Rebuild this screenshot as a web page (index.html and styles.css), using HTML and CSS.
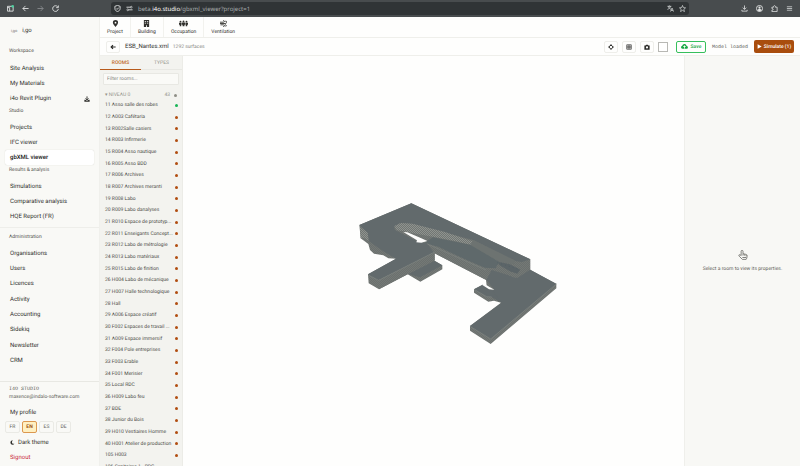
FILE: index.html
```html
<!DOCTYPE html>
<html lang="en">
<head>
<meta charset="utf-8">
<title>gbXML viewer</title>
<link rel="stylesheet" href="styles.css">
</head>
<body>
<svg class="sprite" aria-hidden="true">
  <symbol id="download" viewBox="0 0 16 16"><path d="M8 1v9M4 6.500l4 4 4-4" fill="none" stroke="currentColor" stroke-width="2.500"/><path d="M1 10h3l2 2h4l2-2h3v5H1z" fill="currentColor"/></symbol>
  <symbol id="arrow" viewBox="0 0 16 16"><path d="M15 8H2M8 2L2 8l6 6" fill="none" stroke="currentColor" stroke-width="2"/></symbol>
</svg>
<header class="browser">
  <div class="browser-nav">
    <button aria-label="Tabs"><svg viewBox="0 0 16 16"><path d="M1 3h13v11H1zM1 6h5v8" fill="none" stroke="currentColor" stroke-width="2"/><circle cx="13" cy="3" r="3" fill="#4fd0a0"/></svg></button>
    <button aria-label="Back"><svg viewBox="0 0 16 16"><use href="#arrow"/></svg></button>
    <button aria-label="Forward" class="dim"><svg viewBox="0 0 16 16"><path d="M1 8h13M8 2l6 6-6 6" fill="none" stroke="currentColor" stroke-width="2"/></svg></button>
    <button aria-label="Reload"><svg viewBox="0 0 16 16"><path d="M13 4a6.500 6.500 0 1 0 1.500 5M14.500 1v5h-5" fill="none" stroke="currentColor" stroke-width="2"/></svg></button>
  </div>
  <div class="address">
    <svg viewBox="0 0 16 16"><path d="M8 1l6 2v5c0 4-3 6-6 7-3-1-6-3-6-7V3zM5 8l2 2 4-4" fill="none" stroke="currentColor" stroke-width="2"/></svg>
    <svg viewBox="0 0 16 16"><path d="M1 5h9M6 11h9" stroke="currentColor" stroke-width="2"/><circle cx="12" cy="5" r="2" fill="none" stroke="currentColor" stroke-width="1.500"/><circle cx="4" cy="11" r="2" fill="none" stroke="currentColor" stroke-width="1.500"/></svg>
    <span class="url">beta.<b>i4o.studio</b>/gbxml_viewer?project=1</span>
    <svg viewBox="0 0 16 16"><path d="M1 3h9M5.500 1v2M3 3c1 4 4 6 6 7M8 3c-1 4-4 6-7 7M8 15l3.500-8L15 15M9.500 12.500h4" fill="none" stroke="currentColor" stroke-width="1.600"/></svg>
    <svg viewBox="0 0 16 16"><path d="M8 1l2 5 5 .5-4 3.500 1.500 5L8 12.300 3.500 15 5 10 1 6.500 6 6z" fill="none" stroke="currentColor" stroke-width="1.500"/></svg>
  </div>
  <div class="browser-tools">
    <button aria-label="Downloads"><svg viewBox="0 0 16 16"><path d="M8 1v9M4 6l4 4 4-4M2 11v3h12v-3" fill="none" stroke="currentColor" stroke-width="1.800"/></svg></button>
    <button aria-label="Account"><svg viewBox="0 0 16 16"><circle cx="8" cy="8" r="7" fill="none" stroke="currentColor" stroke-width="2"/><circle cx="8" cy="6" r="2.500" fill="currentColor"/><path d="M3 12c2-4 8-4 10 0l-5 3z" fill="currentColor"/></svg></button>
    <button aria-label="Extensions"><svg viewBox="0 0 16 16"><path d="M2 5h4c-1-5 5-5 4 0h4v10H2v-3c4 0 4-4 0-4z" fill="none" stroke="currentColor" stroke-width="1.800"/></svg></button>
    <button aria-label="Menu"><svg viewBox="0 0 16 16"><path d="M2 4h12M2 8h12M2 12h12" stroke="currentColor" stroke-width="1.600"/></svg></button>
  </div>
</header>
<div class="app">
  <aside class="sidebar">
    <a class="brand" href="#"><small>i,go</small><span>i,go</span></a>
    <nav>
      <h2>Workspace</h2>
      <ul class="nav first">
        <li><a href="#">Site Analysis</a></li>
        <li><a href="#">My Materials</a></li>
        <li><a href="#">i4o Revit Plugin <svg viewBox="0 0 16 16"><use href="#download"/></svg></a></li>
      </ul>
      <h2>Studio</h2>
      <ul class="nav">
        <li><a href="#">Projects</a></li>
        <li><a href="#">IFC viewer</a></li>
        <li><a href="#" class="active">gbXML viewer</a></li>
      </ul>
      <h2>Results &amp; analysis</h2>
      <ul class="nav">
        <li><a href="#">Simulations</a></li>
        <li><a href="#">Comparative analysis</a></li>
        <li><a href="#">HQE Report (FR)</a></li>
      </ul>
      <h2 class="ruled">Administration</h2>
      <ul class="nav">
        <li><a href="#">Organisations</a></li>
        <li><a href="#">Users</a></li>
        <li><a href="#">Licences</a></li>
        <li><a href="#">Activity</a></li>
        <li><a href="#">Accounting</a></li>
        <li><a href="#">Sidekiq</a></li>
        <li><a href="#">Newsletter</a></li>
        <li><a href="#">CRM</a></li>
      </ul>
    </nav>
    <div class="account">
      <p class="org">I4O STUDIO</p>
      <p class="mail">maxence@indalo-software.com</p>
      <a href="#" class="row">My profile</a>
      <div class="langs"><button>FR</button><button class="on">EN</button><button>ES</button><button>DE</button></div>
      <button class="row"><svg viewBox="0 0 16 16"><path d="M9 1C-1 1-1 15 8 15c3 0 5-1 6-3C6 13 4 6 9 1z" fill="currentColor"/></svg>Dark theme</button>
      <a href="#" class="row signout">Signout</a>
    </div>
  </aside>
  <main>
    <nav class="sections">
      <a href="#"><svg viewBox="0 0 16 16"><path fill-rule="evenodd" d="M8 0C1 0 1 7 4 11l4 5 4-5c3-4 3-11-4-11zm0 4a2 2 0 1 1 0 4 2 2 0 0 1 0-4z"/></svg>Project</a>
      <a href="#"><svg viewBox="0 0 16 16"><path fill-rule="evenodd" d="M2 0h12v16H9v-4H7v4H2zM4 2v2h3V2zm5 0v2h3V2zM4 6v2h3V6zm5 0v2h3V6z"/></svg>Building</a>
      <a href="#"><svg class="wide" viewBox="0 0 24 16"><circle cx="4" cy="3" r="2.500"/><circle cx="12" cy="2.500" r="2.500"/><circle cx="20" cy="3" r="2.500"/><path d="M0 6h7v5H6v4H2v-4H0zM8 5.500h8v6h-1.500v4h-5v-4H8zM17 6h7v5h-2v4h-4v-4h-1z"/></svg>Occupation</a>
      <a href="#"><svg viewBox="0 0 16 16"><path d="M0 5h8c4 0 2-5-1-3M0 8h12c5 0 4-7 0-5M1 11h7c4 0 2 6-1 3M11 11c4-1 4 3 2 4" fill="none" stroke="currentColor" stroke-width="2"/></svg>Ventilation</a>
    </nav>
    <div class="toolbar">
      <button class="tool" aria-label="Back"><svg viewBox="0 0 16 16"><path d="M15 8H3M8 3L3 8l5 5" fill="none" stroke="currentColor" stroke-width="3"/></svg></button>
      <h1>ESB_Nantes.xml</h1>
      <span class="count">1292 surfaces</span>
      <button class="tool push" aria-label="Fit view"><svg viewBox="0 0 16 16"><path d="M8 0l4 5H4zM8 16l4-5H4zM0 8l5-4v8zM16 8l-5-4v8z"/></svg></button>
      <button class="tool" aria-label="Grid"><svg viewBox="0 0 16 16"><path d="M2 2h12v12H2zM2 6h12M2 10h12M8 2v12" fill="none" stroke="currentColor" stroke-width="1.700"/></svg></button>
      <button class="tool" aria-label="Snapshot"><svg viewBox="0 0 16 16"><path fill-rule="evenodd" d="M1 4h3l2-2h4l2 2h3v11H1zm7 2a3 3 0 1 0 0 6 3 3 0 0 0 0-6z"/></svg></button>
      <button class="swatch" aria-label="Background colour"></button>
      <button class="save"><svg viewBox="0 0 18 16"><path fill-rule="evenodd" d="M4 14C-1 14-1 7 3 7 4 0 13 0 14 6c5 1 5 8 0 8zM9 5L5 9h3v4h2V9h3z"/></svg>Save</button>
      <span class="status">Model loaded</span>
      <button class="simulate"><svg viewBox="0 0 16 16"><path d="M2 1l13 7-13 7z"/></svg>Simulate (1)</button>
    </div>
    <div class="workspace">
      <section class="rooms">
        <div class="tabs"><button class="on">ROOMS</button><button>TYPES</button></div>
        <input type="text" placeholder="Filter rooms..." aria-label="Filter rooms">
        <div class="level"><span>▾ NIVEAU 0</span><span class="total">43</span><i></i></div>
        <ul>
          <li class="ok"><span>11 Asso salle des robes</span></li>
          <li><span>12 A003 Cafétaria</span></li>
          <li><span>13 R002Salle casiers</span></li>
          <li><span>14 R003 Infirmerie</span></li>
          <li><span>15 R004 Asso nautique</span></li>
          <li><span>16 R005 Asso BDD</span></li>
          <li><span>17 R006 Archives</span></li>
          <li><span>18 R007 Archives meranti</span></li>
          <li><span>19 R008 Labo</span></li>
          <li><span>20 R009 Labo danalyses</span></li>
          <li><span>21 R010 Espace de prototyp...</span></li>
          <li><span>22 R011 Enseigants Concept...</span></li>
          <li><span>23 R012 Labo de métrologie</span></li>
          <li><span>24 R013 Labo matériaux</span></li>
          <li><span>25 R015 Labo de finition</span></li>
          <li><span>26 H004 Labo de mécanique</span></li>
          <li><span>27 H007 Halle technologique</span></li>
          <li><span>28 Hall</span></li>
          <li><span>29 A006 Espace créatif</span></li>
          <li><span>30 F002 Espaces de travail ...</span></li>
          <li><span>31 A009 Espace immersif</span></li>
          <li><span>32 F004 Pole entreprises</span></li>
          <li><span>33 F003 Erable</span></li>
          <li><span>34 F001 Merisier</span></li>
          <li><span>35 Local RDC</span></li>
          <li><span>36 H009 Labo feu</span></li>
          <li><span>37 BDE</span></li>
          <li><span>38 Junior du Bois</span></li>
          <li><span>39 H010 Vestiaires Homme</span></li>
          <li><span>40 H001 Atelier de production</span></li>
          <li><span>105 H003</span></li>
          <li><span>106 Sanitaires 1 - RDC</span></li>
        </ul>
      </section>
      <section class="viewer" aria-label="3D model">
        <svg viewBox="183 56 501 410">
          <defs>
            <pattern id="mesh" width="6" height="6" patternUnits="userSpaceOnUse"><rect width="6" height="6" fill="#6b706e"/><path d="M0 0h3v3H0zM3 3h3v3H3z" fill="#747976"/></pattern>
            <pattern id="lightmesh" width="6" height="6" patternUnits="userSpaceOnUse"><rect width="6" height="6" fill="#717673"/><path d="M0 0h3v3H0zM3 3h3v3H3z" fill="#8f938f"/></pattern>
          </defs>
          <g transform="translate(340 190) scale(.33333)">
            <path fill="url(#mesh)" d="M58 105L214 40 571 208V240L649 281V295L452 462 390 422V408L483 338 462 332 445 335 402 308V298L428 284 440 288 438 269 284 190V213L307 226V238L241 275 203 253 117 298 86 280 84 253 168 206 145 205 130 196 102 191 90 180 85 162 62 145z"/>
            <path fill="#626a6c" d="M58 105L214 40 571 208 545 216 522 212 400 150 215 101 178 100 162 112 165 120 225 151 270 163 284 186 115 270 84 253 168 206 130 184 86 153 83 129z"/>
            <path fill="url(#lightmesh)" d="M60 110L83 128 86 152 71 143 62 145z"/>
            <path fill="url(#lightmesh)" d="M163 108L183 99 218 101 315 126 405 157 395 166 345 153 190 124 170 121z"/>
            <path fill="#6d7371" d="M400 150L525 211 522 222 480 216 390 166z"/>
            <path fill="#5f696b" d="M279 142L390 164 478 216 468 235 435 233 255 157z"/>
            <path fill="url(#mesh)" d="M262 162L295 170 440 239 438 270 284 190z"/>
            <path fill="#626a6c" d="M455 240L528 263 567 237 649 282 452 446 390 408 485 338 455 321 440 310 463 298 439 270z"/>
            <path fill="#626a6c" d="M402 298L428 284 450 297 460 306 485 338 455 320 440 320z"/>
            <path fill="url(#mesh)" d="M468 232L476 221 510 238 531 245 569 210V240L533 263 520 262 484 244z"/>
            <path fill="#5c6568" d="M478 216L510 223 541 239 532 251 510 244 476 224z"/>
            <path fill="#626a6c" d="M205 252L284 212 307 226 240 262z"/>
            <path fill="url(#mesh)" d="M116 270L284 186V211L203 253 117 298z"/>
            <path fill="#fdfdfc" d="M190 126L202 127 244 145 262 153 244 158 229 157 231 151z"/>
            <path fill="#fdfdfc" d="M426 284L440 286 463 299 447 298z"/>
            <path fill="none" stroke="#7f8582" stroke-width="2" d="M86 256L116 271 284 186M390 409L452 447 649 282M402 298L440 320 455 321M262 162L438 240"/>
            <path fill="none" stroke="#4f5d63" stroke-width="2" stroke-dasharray="3 9" d="M472 218L540 239"/>
          </g>
        </svg>
      </section>
      <aside class="properties">
        <svg viewBox="0 0 16 16"><path d="M5 9V2c0-2 3-2 3 0v4l5 1c2 1 2 2 1 6l-1 2H7L2 10c-2-3 1-3 3-1zM8 6v3M10.500 7v2M13 8v2M7 12h6" fill="none" stroke="currentColor" stroke-width="1.200"/></svg>
        <p>Select a room to view its properties.</p>
      </aside>
    </div>
  </main>
</div>
</body>
</html>
```
FILE: styles.css
```css
* { box-sizing: border-box; }
body { margin: 0; height: 100vh; overflow: hidden; display: flex; flex-direction: column; font: 6px/8px Roboto, "Liberation Sans", sans-serif; text-rendering: geometricPrecision; color: #30302d; background: #fefefd; }
button { padding: 0; border: 0; background: none; font: inherit; color: inherit; text-rendering: inherit; display: flex; align-items: center; justify-content: center; }
a { color: inherit; text-decoration: none; }
ul { margin: 0; padding: 0; list-style: none; }
h1, h2, p { margin: 0; font-weight: 400; }
svg { width: 7px; height: 7px; flex: none; fill: currentColor; }
.sprite { display: none; }

.browser { flex: none; height: 17px; display: flex; align-items: center; background: #484c4e; color: #e4e6e6; font: 6px/8px "Noto Sans", sans-serif; }
.browser-nav { width: 111px; padding-left: 7px; display: flex; gap: 8px; }
.browser-nav .dim { color: #888c8e; }
.address { flex: 1; max-width: 578px; height: 13px; padding: 0 3px; border-radius: 3px; background: #303436; display: flex; align-items: center; gap: 5px; }
.url { flex: 1; color: #a9adae; }
.url b { font-weight: 400; color: #fff; }
.browser-tools { margin-left: auto; padding-right: 7px; display: flex; gap: 8px; }

.app { flex: 1; min-height: 0; display: flex; }
.sidebar { flex: none; width: 100px; display: flex; flex-direction: column; background: #f9f9f6; border-right: 1px solid #f0f0ec; }
.brand { display: flex; gap: 5px; align-items: center; padding: 10px 11px 0; }
.brand small { font-size: 4px; color: #74746e; }
.sidebar h2 { padding: 0 9px; font-size: 5px; line-height: 8px; color: #52524d; }
.brand + nav h2:first-child { margin-top: 12px; }
.nav { padding: 5px 5px 0; display: grid; grid-auto-rows: 15px 15px 16px; }
.nav.first { padding-top: 6px; }
.nav a { height: 15px; padding: 0 5px; display: flex; align-items: center; justify-content: space-between; border-radius: 2px; }
.nav svg { width: 6px; height: 6px; margin-right: -1px; }
.nav .active { background: #fff; color: #181818; font-weight: 500; box-shadow: 0 0 1px #c8c8c0; }
.sidebar .ruled { margin-top: 2px; padding-top: 5px; line-height: 8px; border-top: 1px solid #eeeeea; }
.account { margin-top: auto; padding: 3px 5px 1px; border-top: 1px solid #e8e8e3; }
.account p { padding: 0 4px; color: #5e5e58; }
.account .org { font: 5px/8px "Liberation Mono", monospace; }
.account .mail { font-size: 5px; line-height: 9px; margin-bottom: 3px; white-space: nowrap; }
.account .row { height: 15px; padding: 0 5px; display: flex; align-items: center; gap: 3px; }
.account svg { width: 5px; height: 5px; }
.langs { margin: 1px 0 2px; display: flex; gap: 2px; }
.langs button { width: 15px; height: 12px; border: 1px solid #eaeae5; border-radius: 2px; font-size: 5px; color: #5e5e58; }
.langs .on { border-color: #dc9850; background: #fff0c2; color: #9a4b10; font-weight: 700; }
.account .signout { color: #c92a3e; }

main { flex: 1; min-width: 0; display: flex; flex-direction: column; }
.sections { flex: none; height: 21px; display: flex; border-bottom: 1px solid #efefeb; }
.sections a { min-width: 31px; padding: 3px 7px 0; display: flex; flex-direction: column; align-items: center; border-right: 1px solid #f2f2ee; font-size: 5px; line-height: 8px; gap: 1px; }
.sections a:last-child { border: 0; }
.sections .wide { width: 9px; }
.toolbar { flex: none; height: 18px; padding: 0 6px; display: flex; align-items: center; gap: 4px; border-bottom: 1px solid #efefeb; }
.tool { width: 14px; height: 12px; border: 1px solid #eeeeea; border-radius: 2px; color: #292926; }
.tool svg { width: 6px; height: 6px; }
.toolbar h1 { margin-left: 1px; font-size: 6px; line-height: 8px; }
.count { font-size: 5px; color: #86867e; }
.push { margin-left: auto; }
.swatch { width: 10px; height: 10px; border: 1px solid #b8b8b4; background: #fff; }
.save { width: 30px; height: 12px; margin-left: 4px; gap: 3px; border: 1px solid #36bf5c; border-radius: 2px; color: #17a844; font-size: 5px; font-weight: 500; }
.status { margin: 0 2px; font: 5px/8px "Liberation Mono", monospace; color: #5c5c56; }
.simulate { width: 40px; height: 13px; gap: 2px; border-radius: 2px; background: #a94d0d; color: #fff; font-size: 5px; font-weight: 500; }
.simulate svg { width: 5px; height: 5px; }

.workspace { flex: 1; min-height: 0; display: flex; }
.rooms { flex: none; width: 83px; display: flex; flex-direction: column; overflow: hidden; background: #f3f3ef; border-right: 1px solid #ecece7; color: #4e4e49; font-size: 5px; }
.tabs { flex: none; height: 14px; display: flex; }
.tabs button { flex: 1; border-bottom: 1px solid #e8e8e3; color: #93938b; }
.tabs .on { color: #c06a28; border-color: #b85a1b; font-weight: 500; }
.rooms input { flex: none; height: 12px; margin: 3px 3px 6px; padding: 0 3px; border: 1px solid #e8e8e3; border-radius: 1px; background: #fafaf7; font: inherit; text-rendering: inherit; outline: 0; }
.rooms input::placeholder { color: #86867e; }
.level { height: 9px; padding: 0 5px; display: flex; align-items: center; color: #93938b; }
.level .total { margin-left: auto; }
.level i { width: 3px; height: 3px; margin-left: 4px; border-radius: 50%; background: #8e8e86; }
.rooms ul { display: grid; grid-auto-rows: 12px 12px 11px; }
.rooms li { min-width: 0; padding: 0 4px 0 5px; display: flex; align-items: center; gap: 2px; }
.rooms li span { flex: 1; white-space: nowrap; }
.rooms li::after { content: ""; flex: none; width: 3px; height: 3px; border-radius: 50%; background: #b14d10; }
.rooms .ok::after { background: #18b455; }
.viewer { flex: 1; min-width: 0; overflow: hidden; }
.viewer svg { width: 100%; height: 100%; display: block; }
.properties { flex: none; width: 116px; display: flex; flex-direction: column; align-items: center; justify-content: center; gap: 5px; background: #f8f8f5; border-left: 1px solid #efefeb; color: #5e5e58; font-size: 5px; }
.properties svg { width: 10px; height: 10px; }
```
